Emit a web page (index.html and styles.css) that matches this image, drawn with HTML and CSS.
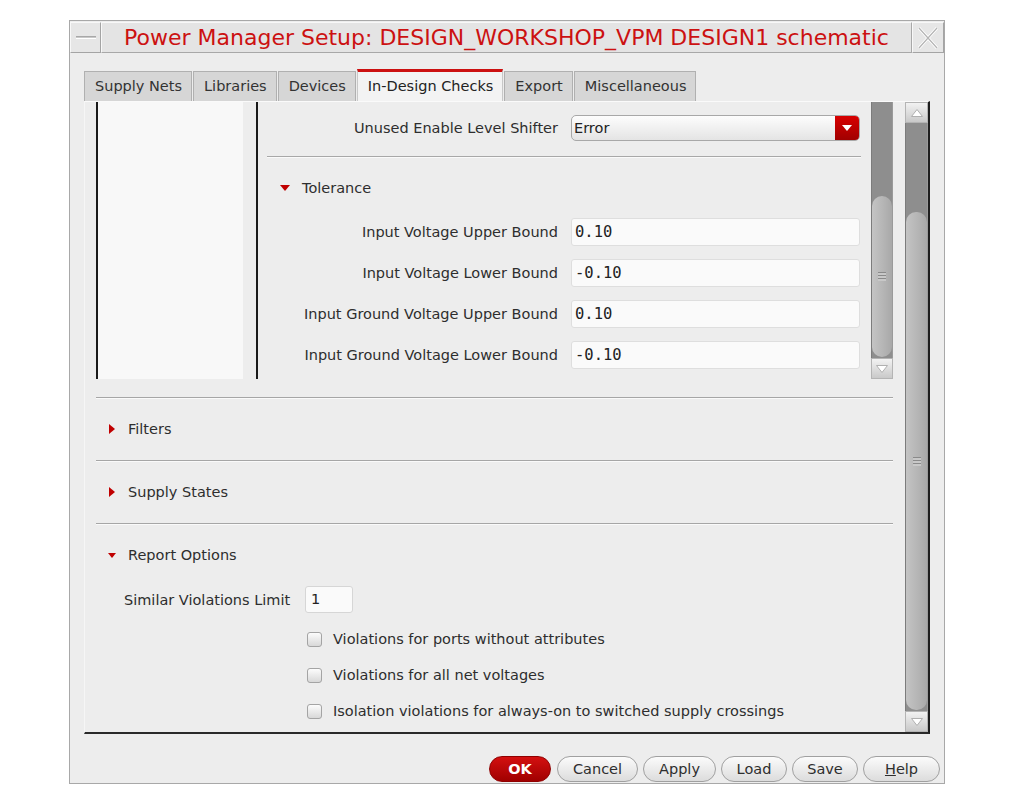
FILE: index.html
```html
<!DOCTYPE html>
<html>
<head>
<meta charset="utf-8">
<title>Power Manager Setup</title>
<link rel="stylesheet" href="styles.css">
</head>
<body>
<div class="window">
  <div class="titlebar">
    <div class="tb-btn tb-min"><span class="min-bar"></span></div>
    <div class="title">Power Manager Setup: DESIGN_WORKSHOP_VPM DESIGN1 schematic</div>
    <div class="tb-btn tb-close">
      <svg width="22" height="24" viewBox="0 0 22 24"><path d="M2 2 L20 22 M20 2 L2 22" stroke="#ffffff" stroke-width="3" fill="none"/><path d="M2 2 L20 22 M20 2 L2 22" stroke="#b4b4b4" stroke-width="1.2" fill="none"/></svg>
    </div>
  </div>
  <div class="body">
    <div class="tabs">
      <div class="tab">Supply Nets</div>
      <div class="tab">Libraries</div>
      <div class="tab">Devices</div>
      <div class="tab active">In-Design Checks</div>
      <div class="tab">Export</div>
      <div class="tab">Miscellaneous</div>
    </div>
    <div class="panel">
      <div class="main">
        <div class="inner">
          <div class="list"><div class="list-fill"></div></div>
          <div class="form">
            <div class="row first">
              <div class="label">Unused Enable Level Shifter</div>
              <div class="combo"><span class="combo-text">Error</span><span class="combo-btn"><svg width="10" height="6" viewBox="0 0 10 6"><polygon points="0,0 10,0 5,6" fill="#fff"/></svg></span></div>
            </div>
            <div class="divider"></div>
            <div class="subhead"><span class="tri-down"></span>Tolerance</div>
            <div class="row field"><div class="label">Input Voltage Upper Bound</div><div class="input">0.10</div></div>
            <div class="row field"><div class="label">Input Voltage Lower Bound</div><div class="input">-0.10</div></div>
            <div class="row field"><div class="label">Input Ground Voltage Upper Bound</div><div class="input">0.10</div></div>
            <div class="row field"><div class="label">Input Ground Voltage Lower Bound</div><div class="input">-0.10</div></div>
          </div>
          <div class="vscroll small">
            <div class="track small-track"><div class="thumb small-thumb"><span class="grip"></span></div></div>
            <div class="arrow"><svg width="12" height="8" viewBox="0 0 12 8"><polygon points="0.5,0.5 11.5,0.5 6,7.5" fill="#fff" stroke="#b0b0b0" stroke-width="1"/></svg></div>
          </div>
        </div>
        <div class="section">
          <div class="sec-head"><span class="tri-right"></span>Filters</div>
        </div>
        <div class="section">
          <div class="sec-head"><span class="tri-right"></span>Supply States</div>
        </div>
        <div class="section last">
          <div class="sec-head"><span class="tri-down sec-tri"></span>Report Options</div>
          <div class="limit-row"><span class="limit-label">Similar Violations Limit</span><span class="limit-input">1</span></div>
          <div class="check-row"><span class="checkbox"></span>Violations for ports without attributes</div>
          <div class="check-row"><span class="checkbox"></span>Violations for all net voltages</div>
          <div class="check-row"><span class="checkbox"></span>Isolation violations for always-on to switched supply crossings</div>
        </div>
      </div>
      <div class="vscroll big">
        <div class="arrow up"><svg width="12" height="8" viewBox="0 0 12 8"><polygon points="0.5,7.5 11.5,7.5 6,0.5" fill="#fff" stroke="#b0b0b0" stroke-width="1"/></svg></div>
        <div class="track big-track"><div class="thumb big-thumb"><span class="grip"></span></div></div>
        <div class="arrow"><svg width="12" height="8" viewBox="0 0 12 8"><polygon points="0.5,0.5 11.5,0.5 6,7.5" fill="#fff" stroke="#b0b0b0" stroke-width="1"/></svg></div>
      </div>
    </div>
    <div class="buttons">
      <div class="btn ok">OK</div>
      <div class="btn w-cancel">Cancel</div>
      <div class="btn w-apply">Apply</div>
      <div class="btn w-load">Load</div>
      <div class="btn w-save">Save</div>
      <div class="btn w-help"><u>H</u>elp</div>
    </div>
  </div>
</div>
</body>
</html>
```
FILE: styles.css
```css
* { box-sizing: border-box; }
html, body { margin: 0; padding: 0; background: #ffffff; }
body {
  font-family: "DejaVu Sans", "Liberation Sans", sans-serif;
  font-size: 14.5px;
  color: #2e2e2e;
}
.window {
  margin: 20px 0 0 69px;
  width: 876px;
  height: 764px;
  border: 1px solid #a8a8a8;
  background: #ededed;
}
.titlebar {
  display: flex;
  height: 31px;
  margin-top: 1px;
}
.tb-btn {
  display: flex;
  align-items: center;
  justify-content: center;
  background: #e6e6e6;
  border: 1px solid;
  border-color: #f8f8f8 #a4a4a4 #a4a4a4 #f8f8f8;
}
.tb-min { width: 31px; }
.min-bar {
  width: 20px;
  height: 3px;
  border-top: 1px solid #a8a8a8;
  border-bottom: 1px solid #ffffff;
  background: #c8c8c8;
}
.tb-close { width: 32px; }
.title {
  flex: 1;
  background: #e4e4e4;
  border: 1px solid;
  border-color: #f8f8f8 #a8a8a8 #a8a8a8 #f8f8f8;
  color: #cc1111;
  font-size: 22px;
  text-align: center;
  line-height: 29px;
  white-space: nowrap;
}
.body {
  padding: 16px 14px 0 14px;
}
.tabs {
  display: flex;
  align-items: flex-end;
  height: 32px;
}
.tab {
  height: 30px;
  line-height: 28px;
  padding: 0 9px 0 10px;
  background: #d6d6d6;
  border: 1px solid #b0b0b0;
  border-bottom: none;
  color: #333;
  margin-right: 1px;
  white-space: nowrap;
}
.tab.active {
  height: 32px;
  background: #f3f3f3;
  border-top: 3px solid #cc1111;
  border-left: 1px solid #c8c8c8;
  border-right: 1px solid #c8c8c8;
  line-height: 28px;
  color: #222;
}
.panel {
  display: flex;
  width: 846px;
  height: 633px;
  border-top: 1px solid #fafafa;
  border-left: 1px solid #f6f6f6;
  border-right: 2px solid #1e1e1e;
  border-bottom: 2px solid #2a2a2a;
}
.main {
  width: 819px;
  padding: 0 11px 0 11px;
  display: flex;
  flex-direction: column;
}
.inner {
  display: flex;
  height: 277px;
}
.list {
  width: 162px;
  border-left: 2px solid #1a1a1a;
  border-right: 2px solid #1a1a1a;
  display: flex;
}
.list-fill {
  width: 145px;
  background: #f8f8f8;
}
.form {
  width: 613px;
  padding: 0 10px 0 1px;
  display: flex;
  flex-direction: column;
}
.row {
  display: flex;
  align-items: center;
}
.row.first { margin-top: 13px; height: 26px; }
.label {
  width: 299px;
  text-align: right;
  white-space: nowrap;
  color: #2e2e2e;
}
.combo {
  margin-left: 13px;
  width: 289px;
  height: 26px;
  display: flex;
  border: 1px solid #a8a8a8;
  border-radius: 5px;
  background: linear-gradient(#fdfdfd, #e4e4e4);
  overflow: hidden;
}
.combo-text {
  flex: 1;
  padding-left: 2px;
  line-height: 24px;
  color: #222;
}
.combo-btn {
  width: 24px;
  background: linear-gradient(#d80000, #a00000);
  display: flex;
  align-items: center;
  justify-content: center;
}
.divider {
  margin: 15px 0 0 8px;
  height: 2px;
  border-top: 1px solid #a8a8a8;
  border-bottom: 1px solid #fafafa;
}
.subhead {
  margin-top: 15px;
  height: 30px;
  display: flex;
  align-items: center;
  padding-left: 21px;
}
.tri-down {
  width: 0;
  height: 0;
  border-left: 5px solid transparent;
  border-right: 5px solid transparent;
  border-top: 6px solid #c00000;
  margin-right: 12px;
}
.tri-down.sec-tri {
  border-left-width: 4px;
  border-right-width: 4px;
  border-top-width: 5px;
  margin-left: -1px;
  margin-right: 12px;
}
.tri-right {
  width: 0;
  height: 0;
  border-top: 5px solid transparent;
  border-bottom: 5px solid transparent;
  border-left: 6px solid #c00000;
  margin-right: 13px;
}
.row.field { margin-top: 13px; height: 28px; }
.subhead + .row.field { margin-top: 15px; }
.input {
  margin-left: 13px;
  width: 289px;
  height: 28px;
  background: #fafafa;
  border: 1px solid #dedede;
  border-radius: 3px;
  font-family: "DejaVu Sans Mono", monospace;
  font-size: 15.5px;
  line-height: 26px;
  padding-left: 3px;
  color: #222;
}
.vscroll {
  display: flex;
  flex-direction: column;
}
.vscroll.small { width: 22px; }
.vscroll.big { width: 24px; margin-left: 1px; }
.track {
  flex: 1;
  background: #8e8e8e;
  border-left: 1px solid #7c7c7c;
  border-right: 1px solid #9a9a9a;
}
.small-track { padding-top: 94px; }
.big-track { padding-top: 89px; }
.thumb {
  background: linear-gradient(90deg, #c4c4c4, #b4b4b4 60%, #a8a8a8);
  border-radius: 10px;
  display: flex;
  align-items: center;
  justify-content: center;
}
.small-thumb { height: 161px; }
.big-thumb { height: 498px; }
.grip {
  width: 8px;
  height: 9px;
  background: repeating-linear-gradient(#8a8a8a 0 1px, #c8c8c8 1px 3px);
}
.arrow {
  height: 21px;
  background: linear-gradient(#f2f2f2, #c9c9c9);
  border: 1px solid #b4b4b4;
  display: flex;
  align-items: center;
  justify-content: center;
}
.section {
  border-top: 1px solid #a6a6a6;
  box-shadow: inset 0 1px 0 #fafafa;
}
.inner + .section { margin-top: 18px; }
.sec-head {
  height: 62px;
  display: flex;
  align-items: center;
  padding-left: 13px;
}
.limit-row {
  display: flex;
  align-items: center;
  height: 27px;
  padding-left: 28px;
}
.limit-label { width: 166px; white-space: nowrap; }
.limit-input {
  margin-left: 15px;
  width: 48px;
  height: 27px;
  background: #fafafa;
  border: 1px solid #d6d6d6;
  border-radius: 3px;
  line-height: 25px;
  padding-left: 5px;
  color: #222;
}
.check-row {
  display: flex;
  align-items: center;
  height: 36px;
  padding-left: 211px;
  white-space: nowrap;
}
.limit-row + .check-row { margin-top: 8px; }
.checkbox {
  width: 15px;
  height: 15px;
  border: 1px solid #a4a4a4;
  border-radius: 3px;
  background: linear-gradient(#fcfcfc, #d8d8d8);
  margin-right: 11px;
}
.buttons {
  display: flex;
  justify-content: flex-end;
  margin-top: 22px;
  margin-right: -10px;
  gap: 5px;
}
.btn {
  height: 26px;
  border-radius: 13px;
  border: 1px solid #a0a0a0;
  background: linear-gradient(#fbfbfb, #dcdcdc);
  text-align: center;
  line-height: 24px;
  color: #2e2e2e;
}
.btn.ok {
  width: 62px;
  background: linear-gradient(#d41010, #a00000);
  border-color: #900000;
  color: #ffffff;
  font-weight: bold;
  margin-right: 1px;
}
.w-cancel { width: 81px; }
.w-apply { width: 73px; }
.w-load { width: 66px; }
.w-save { width: 66px; }
.w-help { width: 77px; }
.btn u { text-decoration: underline; }
```
